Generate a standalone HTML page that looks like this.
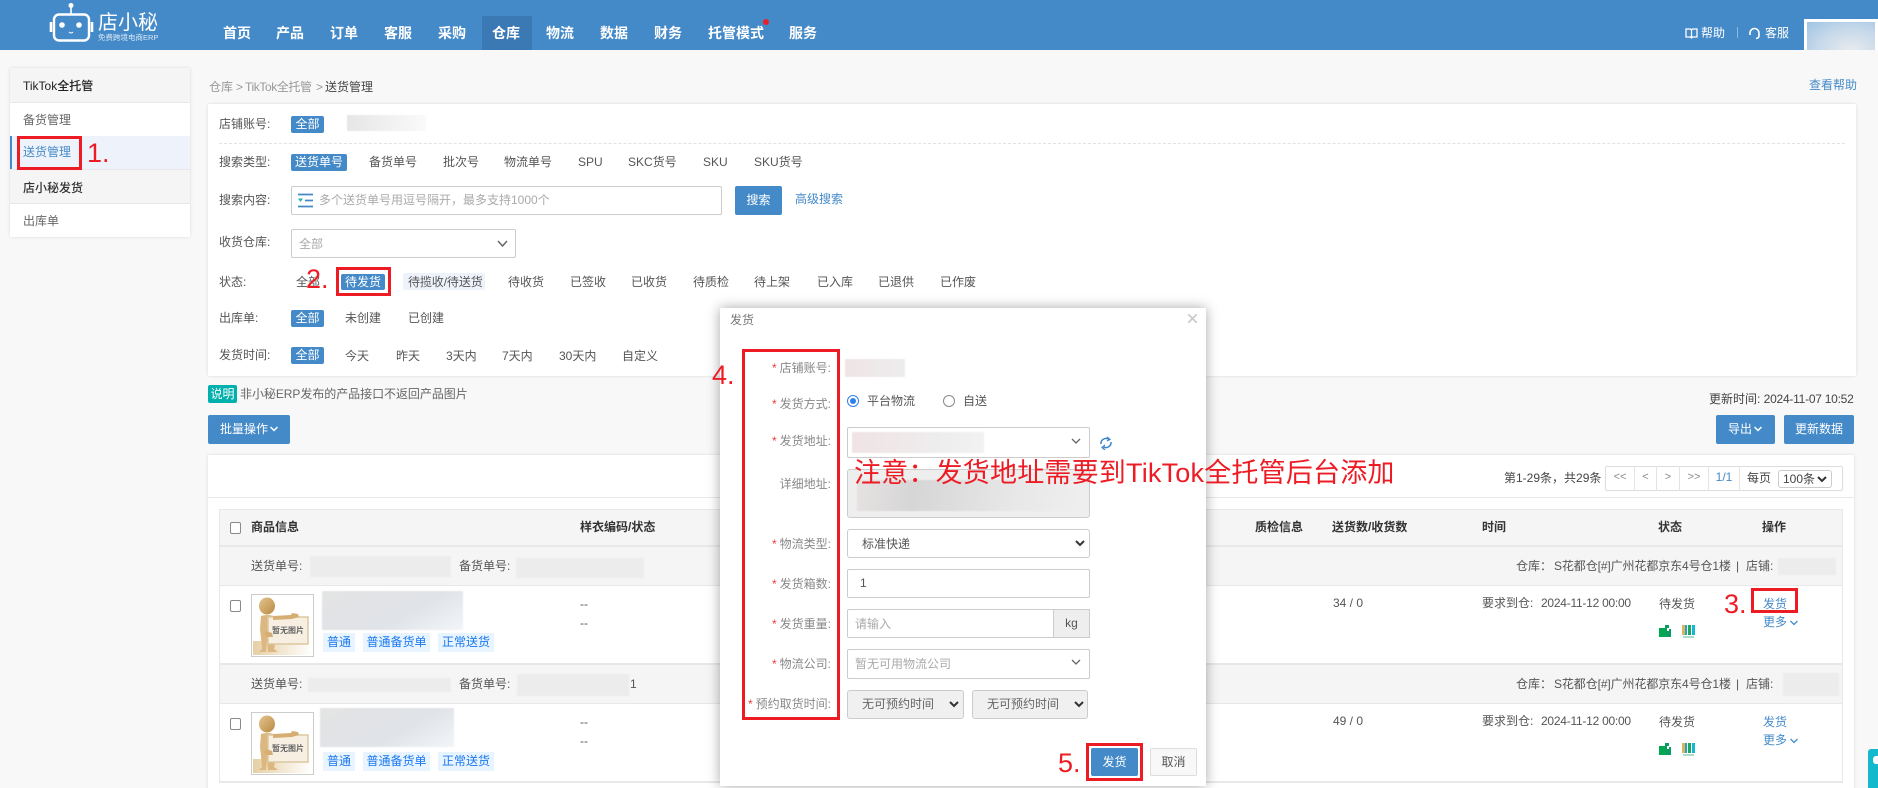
<!DOCTYPE html>
<html lang="zh"><head><meta charset="utf-8"><title>送货管理</title>
<style>
*{box-sizing:border-box}
html,body{margin:0;padding:0;width:1878px;height:788px;overflow:hidden;background:#f8f8f8}
body{position:relative;font:12px/16px "Liberation Sans","Noto Sans CJK SC",sans-serif;color:#555}
#c{position:absolute;left:0;top:0;width:1878px;height:788px;overflow:hidden;filter:blur(.3px)}
.a{position:absolute}
.t{position:absolute;white-space:nowrap;height:16px;line-height:16px}
.d{letter-spacing:-.25px}
.nav{position:absolute;top:24px;font-size:14px;line-height:18px;font-weight:700;color:#fff;white-space:nowrap}
.b{position:absolute;background:#458ac8;color:#fff;text-align:center;border-radius:2px;white-space:nowrap}
.blur{position:absolute;background:#ececec;filter:blur(.6px)}
.box{position:absolute;border:3px solid #ed1c24;background:transparent}
.red{position:absolute;color:#ed1c24;font-size:27px;line-height:30px;white-space:nowrap}
.inp{position:absolute;background:#fff;border:1px solid #ccc;border-radius:2px}
.tag{position:absolute;background:#e8f4ff;color:#1a78f0;height:19px;line-height:19px;text-align:center;white-space:nowrap}
.cb{position:absolute;width:11px;height:12px;border:1px solid #8a8a8a;border-radius:2px;background:#fff}
.bl{color:#458ac8}
.lab{position:absolute;left:730px;width:101px;text-align:right;color:#888;white-space:nowrap;height:16px;line-height:16px}
.lab i{color:#ed3a3a;font-style:normal;margin-right:3px}
.sel{position:absolute;background:#f0f0f0;border:1px solid #ccc;border-radius:3px;color:#666}
.pg{position:absolute;top:466px;height:25px;border-right:1px solid #e4e4e4;text-align:center;line-height:23px;color:#888;font-size:11px}
svg{position:absolute;display:block}
</style></head><body>
<svg width="0" height="0" style="left:0;top:0"><defs>
<linearGradient id="f" x1="0" x2="1"><stop offset="0" stop-color="#e6cfa4"/><stop offset="1" stop-color="#fff"/></linearGradient>
<linearGradient id="h" x1="0" x2="1" y1="0" y2="1"><stop offset="0" stop-color="#e4c48e"/><stop offset="1" stop-color="#b98a42"/></linearGradient>
</defs></svg>
<div id="c">

<!-- header -->
<div class="a" style="left:0;top:0;width:1878px;height:50px;background:#458ac8"></div>
<svg style="left:48px;top:0" width="48" height="44" viewBox="48 0 48 44" fill="none" stroke="#fff">
<rect x="54" y="14.500" width="35" height="26" rx="5" stroke-width="2.400"/>
<path d="M51 22v10M92 22v10" stroke-width="2.600"/>
<path d="M71 7v7" stroke-width="1.600"/><circle cx="71" cy="5.500" r="2.500" fill="#fff" stroke="none"/>
<circle cx="62" cy="25" r="2.800" fill="#fff" stroke="none"/><circle cx="79" cy="25" r="2.800" fill="#fff" stroke="none"/>
<path d="M69 32q2 2 4 0" stroke-width="1"/></svg>
<div class="t" style="left:98px;top:11px;height:24px;line-height:24px;font-size:20px;color:#fff">店小秘</div>
<div class="t" style="left:98px;top:33px;height:10px;line-height:10px;font-size:7.500px;color:#dbe9f6">免费跨境电商ERP</div>

<div class="a" style="left:482px;top:16px;width:50px;height:34px;background:#3a79b3"></div>
<div class="nav" style="left:223px">首页</div><div class="nav" style="left:276px">产品</div>
<div class="nav" style="left:330px">订单</div><div class="nav" style="left:384px">客服</div>
<div class="nav" style="left:438px">采购</div><div class="nav" style="left:492px">仓库</div>
<div class="nav" style="left:546px">物流</div><div class="nav" style="left:600px">数据</div>
<div class="nav" style="left:654px">财务</div><div class="nav" style="left:708px">托管模式</div>
<div class="nav" style="left:789px">服务</div>
<div class="a" style="left:763px;top:19px;width:6px;height:6px;border-radius:50%;background:#e8202a"></div>

<svg style="left:1685px;top:27px" width="13" height="13" viewBox="0 0 13 13" fill="none" stroke="#fff" stroke-width="1.300"><path d="M1 2h4.500l1 1 1-1H12v8H7.500l-1 1-1-1H1zM6.500 3v8"/></svg>
<div class="t" style="left:1701px;top:25px;color:#fff">帮助</div>
<div class="a" style="left:1737px;top:27px;width:1px;height:11px;background:#8fb8dd"></div>
<svg style="left:1748px;top:27px" width="13" height="13" viewBox="0 0 13 13" fill="none" stroke="#fff" stroke-width="1.600"><path d="M2 8V6a4.500 4.500 0 0 1 9 0v3q0 2-3 2.500"/></svg>
<div class="t" style="left:1765px;top:25px;color:#fff">客服</div>
<div class="a" style="left:1804px;top:19px;width:74px;height:31px;border:3px solid #fff;border-bottom:0;background:radial-gradient(ellipse at 65% 100%,#e8ebee 0,#c5d8ea 55%,#9fc3e4 100%)"></div>

<!-- sidebar -->
<div class="a" style="left:10px;top:68px;width:180px;height:169px;background:#fff;box-shadow:0 0 3px rgba(0,0,0,.12)"></div>
<div class="a" style="left:10px;top:68px;width:180px;height:35px;background:#f5f5f5;border-bottom:1px solid #e8e8e8"></div>
<div class="t" style="left:23px;top:78px;color:#222;font-weight:500">TikTok全托管</div>
<div class="t" style="left:23px;top:112px;color:#666">备货管理</div>
<div class="a" style="left:10px;top:136px;width:180px;height:33px;background:#eef3fb;border-left:2px solid #458ac8"></div>
<div class="t" style="left:23px;top:144px;color:#458ac8">送货管理</div>
<div class="a" style="left:10px;top:169px;width:180px;height:35px;background:#f5f5f5;border-top:1px solid #e8e8e8;border-bottom:1px solid #e8e8e8"></div>
<div class="t" style="left:23px;top:180px;color:#333;font-weight:500">店小秘发货</div>
<div class="t" style="left:23px;top:213px;color:#666">出库单</div>

<!-- breadcrumb -->
<div class="t" style="left:209px;top:79px;color:#999">仓库</div>
<div class="t" style="left:236px;top:79px;color:#999">&gt;</div>
<div class="t" style="left:245px;top:79px;color:#999;letter-spacing:-.4px">TikTok全托管</div>
<div class="t" style="left:316px;top:79px;color:#999">&gt;</div>
<div class="t" style="left:325px;top:79px;color:#444">送货管理</div>
<div class="t bl" style="left:1809px;top:77px">查看帮助</div>

<!-- filter panel -->
<div class="a" style="left:208px;top:104px;width:1648px;height:272px;background:#fff;box-shadow:0 0 3px rgba(0,0,0,.12)"></div>
<div class="t" style="left:219px;top:116px">店铺账号:</div>
<div class="b" style="left:291px;top:116px;width:33px;height:17px;line-height:17px">全部</div>
<div class="blur" style="left:347px;top:115px;width:79px;height:16px;background:linear-gradient(90deg,#e6e6e6,#fafafa)"></div>
<div class="a" style="left:219px;top:143px;width:1626px;border-top:1px dashed #e2e2e2"></div>

<div class="t" style="left:219px;top:154px">搜索类型:</div>
<div class="b" style="left:291px;top:154px;width:56px;height:17px;line-height:17px">送货单号</div>
<div class="t" style="left:369px;top:154px">备货单号</div><div class="t" style="left:443px;top:154px">批次号</div>
<div class="t" style="left:504px;top:154px">物流单号</div><div class="t" style="left:578px;top:154px">SPU</div>
<div class="t" style="left:628px;top:154px">SKC货号</div><div class="t" style="left:703px;top:154px">SKU</div>
<div class="t" style="left:754px;top:154px">SKU货号</div>

<div class="t" style="left:219px;top:192px">搜索内容:</div>
<div class="inp" style="left:291px;top:186px;width:431px;height:29px"></div>
<svg style="left:298px;top:193px" width="15" height="15" viewBox="0 0 15 15"><path d="M0 1.500h15M7 7.500h8M0 13.500h15" stroke="#458ac8" stroke-width="1.800"/><path d="M0 5.500h5L2.500 9z" fill="#21b5b0"/></svg>
<div class="t" style="left:319px;top:192px;color:#aaa">多个送货单号用逗号隔开，最多支持1000个</div>
<div class="b" style="left:735px;top:186px;width:47px;height:29px;line-height:29px">搜索</div>
<div class="t bl" style="left:795px;top:191px">高级搜索</div>

<div class="t" style="left:219px;top:234px">收货仓库:</div>
<div class="inp" style="left:291px;top:229px;width:225px;height:29px"></div>
<div class="t" style="left:299px;top:236px;color:#aaa">全部</div>
<svg style="left:497px;top:240px" width="11" height="8" viewBox="0 0 11 8" fill="none" stroke="#666" stroke-width="1.500"><path d="M1 1l4.500 5L10 1"/></svg>

<div class="t" style="left:219px;top:274px">状态:</div>
<div class="t" style="left:296px;top:274px">全部</div>
<div class="b" style="left:341px;top:274px;width:44px;height:16px;line-height:16px">待发货</div>
<div class="a" style="left:403px;top:273px;width:82px;height:17px;background:#eef3fb;border-radius:2px"></div>
<div class="t" style="left:408px;top:274px;letter-spacing:-.1px">待揽收/待送货</div>
<div class="t" style="left:508px;top:274px">待收货</div><div class="t" style="left:570px;top:274px">已签收</div>
<div class="t" style="left:631px;top:274px">已收货</div><div class="t" style="left:693px;top:274px">待质检</div>
<div class="t" style="left:754px;top:274px">待上架</div><div class="t" style="left:817px;top:274px">已入库</div>
<div class="t" style="left:878px;top:274px">已退供</div><div class="t" style="left:940px;top:274px">已作废</div>

<div class="t" style="left:219px;top:310px">出库单:</div>
<div class="b" style="left:291px;top:310px;width:33px;height:17px;line-height:17px">全部</div>
<div class="t" style="left:345px;top:310px">未创建</div><div class="t" style="left:408px;top:310px">已创建</div>

<div class="t" style="left:219px;top:347px">发货时间:</div>
<div class="b" style="left:291px;top:347px;width:33px;height:17px;line-height:17px">全部</div>
<div class="t" style="left:345px;top:348px">今天</div><div class="t" style="left:396px;top:348px">昨天</div>
<div class="t" style="left:446px;top:348px">3天内</div><div class="t" style="left:502px;top:348px">7天内</div>
<div class="t" style="left:559px;top:348px">30天内</div><div class="t" style="left:622px;top:348px">自定义</div>

<!-- notice and buttons -->
<div class="b" style="left:208px;top:385px;width:29px;height:18px;line-height:18px;background:#00b0ac">说明</div>
<div class="t" style="left:240px;top:386px;color:#666;letter-spacing:-.05px">非小秘ERP发布的产品接口不返回产品图片</div>
<div class="t" style="left:1709px;top:391px;color:#444">更新时间: <span class="d">2024-11-07 10:52</span></div>
<div class="b" style="left:208px;top:415px;width:82px;height:29px"></div>
<div class="t" style="left:220px;top:421px;color:#fff">批量操作</div>
<svg style="left:270px;top:426px" width="8" height="6" viewBox="0 0 8 6" fill="none" stroke="#fff" stroke-width="1.500"><path d="M.5 1l3.500 3.500L7.500 1"/></svg>
<div class="b" style="left:1716px;top:415px;width:59px;height:29px"></div>
<div class="t" style="left:1728px;top:421px;color:#fff">导出</div>
<svg style="left:1754px;top:426px" width="8" height="6" viewBox="0 0 8 6" fill="none" stroke="#fff" stroke-width="1.500"><path d="M.5 1l3.500 3.500L7.500 1"/></svg>
<div class="b" style="left:1784px;top:415px;width:70px;height:29px;line-height:29px">更新数据</div>

<!-- table panel -->
<div class="a" style="left:208px;top:455px;width:1646px;height:340px;background:#fff;box-shadow:0 0 3px rgba(0,0,0,.12)"></div>
<div class="a" style="left:208px;top:497px;width:1646px;height:1px;background:#e8e8e8"></div>
<div class="t" style="left:1504px;top:470px;color:#444">第1-29条，共29条</div>
<div class="a" style="left:1605px;top:466px;width:238px;height:25px;border:1px solid #ddd;border-radius:2px"></div>
<div class="pg" style="left:1606px;width:29px">&lt;&lt;</div><div class="pg" style="left:1635px;width:22px">&lt;</div>
<div class="pg" style="left:1657px;width:23px">&gt;</div><div class="pg" style="left:1680px;width:29px">&gt;&gt;</div>
<div class="pg" style="left:1709px;width:31px;color:#458ac8;font-size:12px">1/1</div>
<div class="t" style="left:1747px;top:470px;color:#444">每页</div>
<div class="inp" style="left:1778px;top:470px;width:54px;height:18px;line-height:17px;padding-left:4px;color:#444;border-radius:3px">100条</div>
<svg style="left:1817px;top:476px" width="10" height="7" viewBox="0 0 10 7" fill="none" stroke="#333" stroke-width="2"><path d="M1 1l4 4 4-4"/></svg>

<div class="a" style="left:219px;top:509px;width:1624px;height:38px;background:#f5f5f5;border:1px solid #e8e8e8;border-bottom:2px solid #e8e8e8"></div>
<div class="cb" style="left:230px;top:522px"></div>
<div class="t" style="left:251px;top:519px;color:#333;font-weight:700">商品信息</div>
<div class="t" style="left:580px;top:519px;color:#333;font-weight:700">样衣编码/状态</div>
<div class="t" style="left:1255px;top:519px;color:#333;font-weight:700">质检信息</div>
<div class="t" style="left:1332px;top:519px;color:#333;font-weight:700">送货数/收货数</div>
<div class="t" style="left:1482px;top:519px;color:#333;font-weight:700">时间</div>
<div class="t" style="left:1658px;top:519px;color:#333;font-weight:700">状态</div>
<div class="t" style="left:1762px;top:519px;color:#333;font-weight:700">操作</div>

<!-- group 1 -->
<div class="a" style="left:219px;top:547px;width:1624px;height:39px;background:#f5f5f5;border:1px solid #e8e8e8;border-top:0"></div>
<div class="t" style="left:251px;top:558px">送货单号:</div>
<div class="blur" style="left:310px;top:556px;width:141px;height:21px"></div>
<div class="t" style="left:459px;top:558px">备货单号:</div>
<div class="blur" style="left:516px;top:558px;width:128px;height:20px"></div>
<div class="t" style="left:1516px;top:558px">仓库：</div>
<div class="t" style="left:1554px;top:558px;letter-spacing:-.1px">S花都仓[#]广州花都京东4号仓1楼</div>
<div class="t" style="left:1736px;top:558px">|</div>
<div class="t" style="left:1746px;top:558px">店铺:</div>
<div class="blur" style="left:1778px;top:558px;width:58px;height:17px"></div>

<!-- row 1 -->
<div class="a" style="left:219px;top:586px;width:1624px;height:79px;background:#fff;border:1px solid #e8e8e8;border-top:0;border-bottom:2px solid #e8e8e8"></div>
<div class="cb" style="left:230px;top:600px"></div>
<div class="a" style="left:251px;top:594px;width:63px;height:63px;border:1px solid #ccc;background:#fff"></div>
<svg style="left:252px;top:595px" width="61" height="61" viewBox="0 0 61 61">
<rect x="1" y="46" width="59" height="14" fill="url(#f)"/>
<ellipse cx="15" cy="11" rx="8" ry="8.500" fill="url(#h)"/>
<path d="M9 21q6-2 13 0l1 10 1 14-2 9 4 3H16l-1-11-1 11H7l3-3-1-11-1-9z" fill="#dcb880"/>
<rect x="16" y="22" width="40" height="27" fill="#f7f0e2" stroke="#dcc8a2" stroke-width="1.500"/>
<path d="M21 21l18-1 1-2 6 1 1 3-7 2-19 1z" fill="#d6ad72"/>
<path d="M14 36l6 2 1 4-5 0-4-2z" fill="#d6ad72"/>
<text x="20" y="38" font-size="8" fill="#666" font-weight="700" font-family="Liberation Sans,Noto Sans CJK SC,sans-serif">暂无图片</text></svg>
<div class="blur" style="left:322px;top:591px;width:141px;height:39px;background:linear-gradient(150deg,#e4e4e4,#e0e3e8 60%,#f2f5fa)"></div>
<div class="tag" style="left:323px;top:633px;width:32px">普通</div>
<div class="tag" style="left:363px;top:633px;width:67px">普通备货单</div>
<div class="tag" style="left:438px;top:633px;width:56px">正常送货</div>
<div class="t" style="left:580px;top:596px">--</div><div class="t" style="left:580px;top:615px">--</div>
<div class="t" style="left:1333px;top:595px">34 / 0</div>
<div class="t" style="left:1482px;top:595px">要求到仓:</div>
<div class="t d" style="left:1541px;top:595px">2024-11-12 00:00</div>
<div class="t" style="left:1659px;top:596px">待发货</div>
<svg style="left:1659px;top:625px" width="13" height="13" viewBox="0 0 13 13"><path d="M0 3h7v9H0z" fill="#00a651"/><path d="M6 0h4v4h2v8H7V4H6z" fill="#0c9a63"/><path d="M8 3h2v3H8z" fill="#fff"/></svg>
<svg style="left:1682px;top:625px" width="13" height="13" viewBox="0 0 13 13"><path d="M0 0h3v10H0z" fill="#d9b65a"/><path d="M3 0h2v10H3z" fill="#22a5c9"/><path d="M6 0h3v10H6z" fill="#1aa762"/><path d="M10 0h3v10h-3z" fill="#17b8cf"/><path d="M1 11.500h11v1H1z" fill="#5cb99a"/></svg>
<div class="t bl" style="left:1763px;top:596px">发货</div>
<div class="t bl" style="left:1763px;top:614px">更多</div>
<svg style="left:1790px;top:620px" width="8" height="6" viewBox="0 0 8 6" fill="none" stroke="#458ac8" stroke-width="1.300"><path d="M.5 1l3.500 3.500L7.500 1"/></svg>

<!-- group 2 -->
<div class="a" style="left:219px;top:665px;width:1624px;height:39px;background:#f5f5f5;border:1px solid #e8e8e8;border-top:0"></div>
<div class="t" style="left:251px;top:676px">送货单号:</div>
<div class="blur" style="left:308px;top:678px;width:143px;height:14px"></div>
<div class="t" style="left:459px;top:676px">备货单号:</div>
<div class="blur" style="left:517px;top:674px;width:112px;height:22px"></div>
<div class="t" style="left:630px;top:676px">1</div>
<div class="t" style="left:1516px;top:676px">仓库：</div>
<div class="t" style="left:1554px;top:676px;letter-spacing:-.1px">S花都仓[#]广州花都京东4号仓1楼</div>
<div class="t" style="left:1736px;top:676px">|</div>
<div class="t" style="left:1746px;top:676px">店铺:</div>
<div class="blur" style="left:1783px;top:673px;width:56px;height:23px"></div>

<!-- row 2 -->
<div class="a" style="left:219px;top:704px;width:1624px;height:79px;background:#fff;border:1px solid #e8e8e8;border-top:0;border-bottom:2px solid #e8e8e8"></div>
<div class="cb" style="left:230px;top:718px"></div>
<div class="a" style="left:251px;top:712px;width:63px;height:63px;border:1px solid #ccc;background:#fff"></div>
<svg style="left:252px;top:713px" width="61" height="61" viewBox="0 0 61 61">
<rect x="1" y="46" width="59" height="14" fill="url(#f)"/>
<ellipse cx="15" cy="11" rx="8" ry="8.500" fill="url(#h)"/>
<path d="M9 21q6-2 13 0l1 10 1 14-2 9 4 3H16l-1-11-1 11H7l3-3-1-11-1-9z" fill="#dcb880"/>
<rect x="16" y="22" width="40" height="27" fill="#f7f0e2" stroke="#dcc8a2" stroke-width="1.500"/>
<path d="M21 21l18-1 1-2 6 1 1 3-7 2-19 1z" fill="#d6ad72"/>
<path d="M14 36l6 2 1 4-5 0-4-2z" fill="#d6ad72"/>
<text x="20" y="38" font-size="8" fill="#666" font-weight="700" font-family="Liberation Sans,Noto Sans CJK SC,sans-serif">暂无图片</text></svg>
<div class="blur" style="left:320px;top:708px;width:134px;height:39px;background:linear-gradient(150deg,#e4e4e4,#e0e3e8 60%,#f2f5fa)"></div>
<div class="tag" style="left:323px;top:752px;width:32px">普通</div>
<div class="tag" style="left:363px;top:752px;width:67px">普通备货单</div>
<div class="tag" style="left:438px;top:752px;width:56px">正常送货</div>
<div class="t" style="left:580px;top:714px">--</div><div class="t" style="left:580px;top:733px">--</div>
<div class="t" style="left:1333px;top:713px">49 / 0</div>
<div class="t" style="left:1482px;top:713px">要求到仓:</div>
<div class="t d" style="left:1541px;top:713px">2024-11-12 00:00</div>
<div class="t" style="left:1659px;top:714px">待发货</div>
<svg style="left:1659px;top:743px" width="13" height="13" viewBox="0 0 13 13"><path d="M0 3h7v9H0z" fill="#00a651"/><path d="M6 0h4v4h2v8H7V4H6z" fill="#0c9a63"/><path d="M8 3h2v3H8z" fill="#fff"/></svg>
<svg style="left:1682px;top:743px" width="13" height="13" viewBox="0 0 13 13"><path d="M0 0h3v10H0z" fill="#d9b65a"/><path d="M3 0h2v10H3z" fill="#22a5c9"/><path d="M6 0h3v10H6z" fill="#1aa762"/><path d="M10 0h3v10h-3z" fill="#17b8cf"/><path d="M1 11.500h11v1H1z" fill="#5cb99a"/></svg>
<div class="t bl" style="left:1763px;top:714px">发货</div>
<div class="t bl" style="left:1763px;top:732px">更多</div>
<svg style="left:1790px;top:738px" width="8" height="6" viewBox="0 0 8 6" fill="none" stroke="#458ac8" stroke-width="1.300"><path d="M.5 1l3.500 3.500L7.500 1"/></svg>

<!-- side floating tab -->
<div class="a" style="left:1868px;top:749px;width:10px;height:39px;background:#13b8cc;border-radius:3px 0 0 0"></div>
<div class="a" style="left:1873px;top:756px;width:5px;height:8px;background:#fff;border-radius:3px 0 0 3px"></div>

<!-- dialog -->
<div class="a" style="left:720px;top:308px;width:486px;height:478px;background:#fff;box-shadow:0 0 12px rgba(0,0,0,.35)"></div>
<div class="t" style="left:730px;top:312px;color:#777">发货</div>
<svg style="left:1188px;top:314px" width="9" height="9" viewBox="0 0 9 9" stroke="#ccc" stroke-width="1.800"><path d="M0 0l9 9M9 0L0 9"/></svg>

<div class="lab" style="top:360px"><i>*</i>店铺账号:</div>
<div class="lab" style="top:396px"><i>*</i>发货方式:</div>
<div class="lab" style="top:433px"><i>*</i>发货地址:</div>
<div class="lab" style="top:476px">详细地址:</div>
<div class="lab" style="top:536px"><i>*</i>物流类型:</div>
<div class="lab" style="top:576px"><i>*</i>发货箱数:</div>
<div class="lab" style="top:616px"><i>*</i>发货重量:</div>
<div class="lab" style="top:656px"><i>*</i>物流公司:</div>
<div class="lab" style="top:696px"><i>*</i>预约取货时间:</div>

<div class="blur" style="left:845px;top:359px;width:60px;height:18px;background:linear-gradient(90deg,#f0e4e6,#ededed)"></div>
<div class="a" style="left:847px;top:395px;width:12px;height:12px;border:1.500px solid #2f80ed;border-radius:50%"></div>
<div class="a" style="left:850px;top:398px;width:6px;height:6px;background:#2f80ed;border-radius:50%"></div>
<div class="t" style="left:867px;top:393px;color:#555">平台物流</div>
<div class="a" style="left:943px;top:395px;width:12px;height:12px;border:1px solid #888;border-radius:50%"></div>
<div class="t" style="left:963px;top:393px;color:#555">自送</div>

<div class="inp" style="left:847px;top:427px;width:243px;height:31px"></div>
<div class="blur" style="left:852px;top:432px;width:132px;height:21px;background:linear-gradient(90deg,#f0e3e5,#eeeeee 70%,#f2f2f2)"></div>
<svg style="left:1071px;top:438px" width="10" height="7" viewBox="0 0 10 7" fill="none" stroke="#666" stroke-width="1.300"><path d="M1 1l4 4 4-4"/></svg>
<svg style="left:1100px;top:436px" width="12" height="14" viewBox="0 0 12 14" fill="none" stroke="#3b86c8" stroke-width="1.500"><path d="M1 8a5 5 0 0 1 8-4.500M11 6a5 5 0 0 1-8 4.500"/><path d="M7 1l3 2.500L7 5M5 9l-3 2.500L5 14" stroke-width="1.200"/></svg>

<div class="a" style="left:847px;top:469px;width:243px;height:49px;background:#eee;border:1px solid #ccc;border-radius:3px"></div>
<div class="blur" style="left:857px;top:480px;width:228px;height:31px;background:linear-gradient(100deg,#e6e2e2,#d6d6d6 25%,#e8e8e8 70%,#efefef)"></div>

<div class="inp" style="left:847px;top:529px;width:243px;height:29px;border-radius:3px"></div>
<div class="t" style="left:862px;top:536px;color:#555">标准快递</div>
<svg style="left:1075px;top:540px" width="10" height="7" viewBox="0 0 10 7" fill="none" stroke="#333" stroke-width="2"><path d="M1 1l4 4 4-4"/></svg>

<div class="inp" style="left:847px;top:569px;width:243px;height:29px"></div>
<div class="t" style="left:860px;top:575px;color:#555">1</div>

<div class="inp" style="left:847px;top:609px;width:243px;height:29px"></div>
<div class="a" style="left:1053px;top:609px;width:37px;height:29px;background:#eee;border:1px solid #ccc;text-align:center;line-height:27px;color:#555">kg</div>
<div class="t" style="left:855px;top:616px;color:#aaa">请输入</div>

<div class="inp" style="left:847px;top:649px;width:243px;height:30px"></div>
<div class="t" style="left:855px;top:656px;color:#aaa">暂无可用物流公司</div>
<svg style="left:1071px;top:659px" width="10" height="7" viewBox="0 0 10 7" fill="none" stroke="#666" stroke-width="1.300"><path d="M1 1l4 4 4-4"/></svg>

<div class="sel" style="left:847px;top:690px;width:117px;height:29px"></div>
<div class="t" style="left:862px;top:696px;color:#666">无可预约时间</div>
<svg style="left:949px;top:701px" width="10" height="7" viewBox="0 0 10 7" fill="none" stroke="#333" stroke-width="2"><path d="M1 1l4 4 4-4"/></svg>
<div class="sel" style="left:972px;top:690px;width:116px;height:29px"></div>
<div class="t" style="left:987px;top:696px;color:#666">无可预约时间</div>
<svg style="left:1074px;top:701px" width="10" height="7" viewBox="0 0 10 7" fill="none" stroke="#333" stroke-width="2"><path d="M1 1l4 4 4-4"/></svg>

<div class="b" style="left:1091px;top:748px;width:47px;height:28px;line-height:28px">发货</div>
<div class="a" style="left:1150px;top:748px;width:47px;height:28px;line-height:26px;background:#f8f8f8;border:1px solid #ddd;text-align:center;color:#555;border-radius:2px">取消</div>
</div>

<!-- annotations -->
<div class="box" style="left:17px;top:136px;width:65px;height:34px"></div>
<div class="red" style="left:87px;top:138px">1.</div>
<div class="box" style="left:336px;top:267px;width:55px;height:29px"></div>
<div class="red" style="left:306px;top:264px">2.</div>
<div class="box" style="left:1751px;top:588px;width:47px;height:25px"></div>
<div class="red" style="left:1724px;top:589px">3.</div>
<div class="box" style="left:742px;top:349px;width:98px;height:371px"></div>
<div class="red" style="left:712px;top:360px">4.</div>
<div class="box" style="left:1086px;top:743px;width:57px;height:38px"></div>
<div class="red" style="left:1058px;top:748px">5.</div>
<div class="red" style="left:854px;top:458px;letter-spacing:.2px">注意：发货地址需要到TikTok全托管后台添加</div>
</body></html>
